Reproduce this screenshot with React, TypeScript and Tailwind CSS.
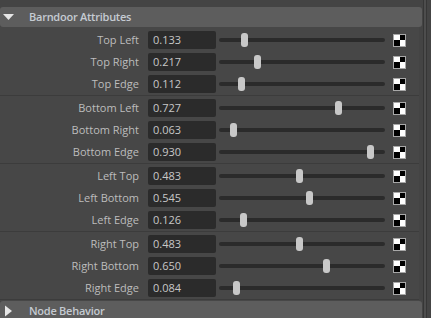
type Attr = { label: string; value: number };

const groups: Attr[][] = [
  [
    { label: "Top Left", value: 0.133 },
    { label: "Top Right", value: 0.217 },
    { label: "Top Edge", value: 0.112 },
  ],
  [
    { label: "Bottom Left", value: 0.727 },
    { label: "Bottom Right", value: 0.063 },
    { label: "Bottom Edge", value: 0.93 },
  ],
  [
    { label: "Left Top", value: 0.483 },
    { label: "Left Bottom", value: 0.545 },
    { label: "Left Edge", value: 0.126 },
  ],
  [
    { label: "Right Top", value: 0.483 },
    { label: "Right Bottom", value: 0.65 },
    { label: "Right Edge", value: 0.084 },
  ],
];

// small 2x2 checker used as the "map" button
function MapButton() {
  return (
    <div className="w-[13px] h-[13px] border border-[#a8a8a8] grid grid-cols-2 grid-rows-2 bg-white">
      <div className="bg-white" />
      <div className="bg-black" />
      <div className="bg-black" />
      <div className="bg-white" />
    </div>
  );
}

function AttrRow({ label, value }: Attr) {
  return (
    <div className="h-[22px] flex items-center">
      {/* label */}
      <div className="w-[140px] pr-[1px] text-right text-[11px] text-[#bdbdbd] whitespace-nowrap">
        {label}
      </div>

      {/* value field */}
      <div className="ml-[8px] w-[68px] h-[18px] rounded-[2px] bg-[#2b2b2b] pl-[5px] flex items-center text-[11px] text-[#c8c8c8]">
        {value.toFixed(3)}
      </div>

      {/* slider */}
      <div className="ml-[3px] w-[166px] h-[14px] relative flex items-center">
        <div className="w-full h-[4px] rounded-full bg-[#2b2b2b]" />
        <div
          className="absolute top-0 w-[7px] h-[14px] rounded-[3px] bg-[#c8c8c8]"
          style={{ left: Math.round(value * 158) + 1 }}
        />
      </div>

      <div className="ml-[8px]">
        <MapButton />
      </div>
    </div>
  );
}

export default function App() {
  return (
    <div
      className="w-[431px] h-[318px] bg-[#444444] flex overflow-hidden"
      style={{ fontFamily: '"Open Sans", "Noto Sans", sans-serif' }}
    >
      <div className="w-[422px] flex flex-col pt-[7px]">
        {/* ================= HEADER ================= */}
        <div className="h-[20px] shrink-0 rounded-[3px] bg-[#5d5d5d] flex items-center">
          <svg width="14" height="8" viewBox="0 0 14 8" className="ml-[2px]">
            <polygon points="1,1 12,1 6.5,7" fill="#e6e6e6" />
          </svg>
          <span className="ml-[13px] text-[11px] font-semibold tracking-[-0.25px] text-[#c5cbd2]">
            Barndoor Attributes
          </span>
        </div>

        {/* ================= ATTRIBUTE GROUPS ================= */}
        <div className="pt-[2px] bg-[#474747] mr-[3px]">
          {groups.map((g, i) => (
            <div key={i}>
              {g.map((a) => (
                <AttrRow key={a.label} {...a} />
              ))}
              <div className="h-[2px] border-t border-[#3c3c3c]" />
            </div>
          ))}
        </div>

        {/* ================= NODE BEHAVIOR ================= */}
        <div className="h-[20px] shrink-0 rounded-[3px] bg-[#5d5d5d] flex items-center">
          <svg width="10" height="12" viewBox="0 0 10 12" className="ml-[4px]">
            <polygon points="1,0.5 8,6 1,11.5" fill="#e6e6e6" />
          </svg>
          <span className="ml-[15px] text-[11px] font-semibold tracking-[-0.25px] text-[#c5cbd2]">
            Node Behavior
          </span>
        </div>
      </div>

      {/* ================= SCROLL GUTTER ================= */}
      <div className="flex-1 flex">
        <div className="w-[1px] ml-[1px] bg-[#363636]" />
        <div className="w-[2px] bg-[#4d4d4d]" />
        <div className="w-[1px] bg-[#363636]" />
        <div className="flex-1 bg-[#444444]" />
      </div>
    </div>
  );
}
